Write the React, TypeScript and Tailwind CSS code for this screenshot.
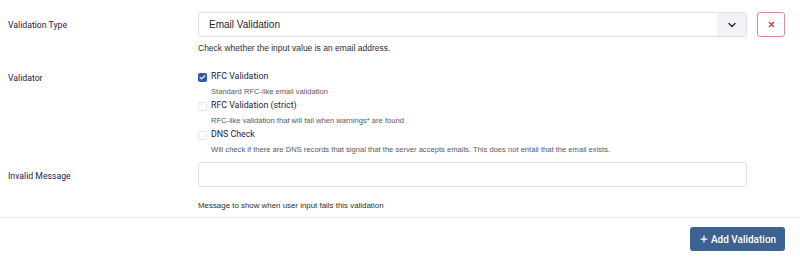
import { Check, ChevronDown, Plus, X } from 'lucide-react';

const validators = [
  { name: 'RFC Validation', desc: 'Standard RFC-like email validation', checked: true },
  { name: 'RFC Validation (strict)', desc: 'RFC-like validation that will fail when warnings* are found', checked: false },
  {
    name: 'DNS Check',
    desc: 'Will check if there are DNS records that signal that the server accepts emails. This does not entail that the email exists.',
    checked: false,
  },
];

const label = "w-[198px] pl-2 font-['Roboto',sans-serif] text-[8.7px] leading-[14px] text-[#1a2446]";

export default function App() {
  return (
    <div className="w-[800px] h-[263px] bg-white font-['Liberation_Sans',Arial,sans-serif] text-[#1f2a44] overflow-hidden">
      <div className="pt-3">
        {/* validation type */}
        <div className="flex">
          <div className={`${label} pt-[6px]`}>Validation Type</div>
          <div className="w-[549px]">
            <div className="h-[25px] flex border border-[#dcdfe4] rounded-[3px] overflow-hidden">
              <div className="flex-1 pl-[10px] text-[10px] leading-[23px] text-[#1f2330]">Email Validation</div>
              <div className="w-[29px] bg-[#f1f3f6] flex items-center justify-center">
                <ChevronDown size={12} strokeWidth={2.5} className="text-[#222]" />
              </div>
            </div>
            <div className="mt-[5px] text-[8.5px] leading-[13px] text-[#2b2f36]">
              Check whether the input value is an email address.
            </div>
          </div>
          <div className="ml-[10px]">
            <button className="w-[28px] h-[25px] border border-[#e08b90] rounded-[3px] flex items-center justify-center">
              <X size={9} strokeWidth={3} className="text-[#c8282f]" />
            </button>
          </div>
        </div>

        {/* validator */}
        <div className="flex mt-[15px]">
          <div className={`${label} pt-[1px]`}>Validator</div>
          <div className="flex flex-col">
            {validators.map((v) => (
              <div key={v.name} className="mb-[1px]">
                <div className="flex items-center h-[14px]">
                  {v.checked ? (
                    <span className="w-[9px] h-[9px] rounded-[2px] bg-[#2a5db0] flex items-center justify-center">
                      <Check size={7} strokeWidth={4} className="text-white" />
                    </span>
                  ) : (
                    <span className="w-[9px] h-[9px] rounded-[2px] border border-[#e3e5e8] bg-white" />
                  )}
                  <span className="ml-[4px] font-['Roboto',sans-serif] text-[8.8px] text-[#1a2446]">
                    {v.name}
                  </span>
                </div>
                <div className="pl-[13px] mt-[1px] text-[7.6px] leading-[13px] text-[#555a63]">{v.desc}</div>
              </div>
            ))}
          </div>
        </div>

        {/* invalid message */}
        <div className="flex mt-[5px]">
          <div className={`${label} pt-[7px]`}>Invalid Message</div>
          <div className="w-[549px]">
            <div className="h-[25px] border border-[#dcdfe4] rounded-[3px]" />
            <div className="mt-[13px] text-[7.9px] leading-[12px] text-[#2b2f36]">
              Message to show when user input fails this validation
            </div>
          </div>
        </div>
      </div>

      <div className="mt-[5px] border-t border-[#e8eaee] flex justify-end pr-[15px] pt-[9px]">
        <button className="h-[24px] w-[95px] bg-[#3d6191] rounded-[3px] flex items-center justify-center text-white font-['Roboto',sans-serif] font-medium text-[10px]">
          <Plus size={10} strokeWidth={3} className="mr-[2px]" />
          Add Validation
        </button>
      </div>
    </div>
  );
}
